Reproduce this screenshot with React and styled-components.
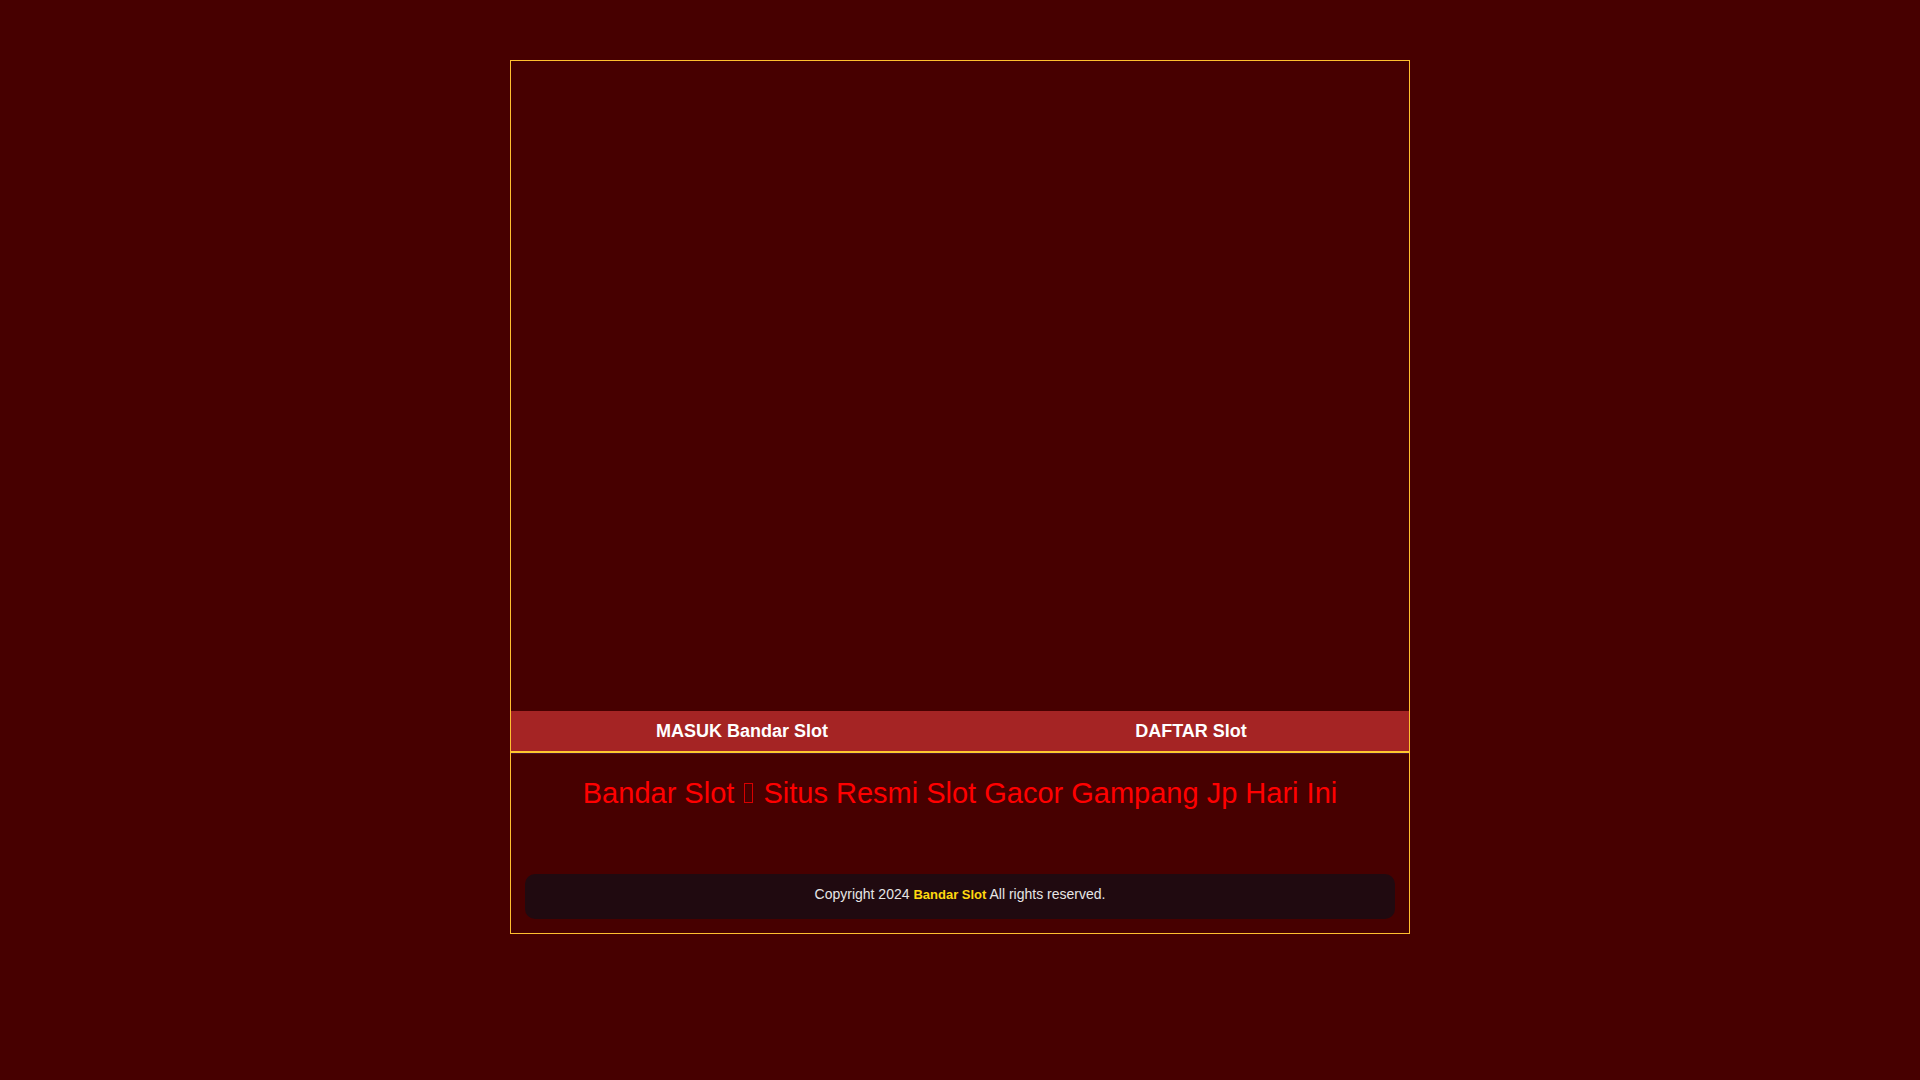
import React from "react"
import styled, { createGlobalStyle } from "styled-components"

const GlobalStyle = createGlobalStyle`
    * {
        box-sizing: border-box;
    }

    body {
        margin: 0;
        background: #470000;
        font-family: "Liberation Sans", Arial, sans-serif;
    }
`

const Container = styled.main`
    max-width: 900px;
    margin: 60px auto;
    border: 1px solid #ffbf2f;
`

const Banner = styled.div`
    height: 650px;
`

const Menu = styled.nav`
    display: grid;
    grid-template-columns: 1fr 1fr;
    background: #a52424;
    border-bottom: 2px solid #ffc72f;
    box-shadow: 0 1px 0 #4a1230;
`

const MenuLink = styled.a`
    padding: 0 0 0 13px;
    color: #fff;
    font-size: 18px;
    font-weight: bold;
    line-height: 40px;
    text-align: center;
    text-decoration: none;
`

const Title = styled.h1`
    margin: 0;
    padding: 20px 14px 61px;
    color: #f00;
    font-size: 29px;
    font-weight: normal;
    line-height: 40px;
    text-align: center;
`

// narrow empty box between the two halves of the title
const TitleBox = styled.span`
    display: inline-block;
    width: 9px;
    height: 20px;
    margin: 0 2px;
    border: 1px solid #d80000;
    vertical-align: baseline;
`

const Footer = styled.footer`
    margin: 0 14px 14px;
    padding: 10px 10px 14px;
    border-radius: 10px;
    background: #200a10;
    color: #e6e6e6;
    font-size: 14px;
    line-height: 20px;
    text-align: center;
`

const FooterLink = styled.a`
    color: #ffd90f;
    font-size: 13px;
    font-weight: bold;
    text-decoration: none;
`

export default function App() {
    return (
        <>
            <GlobalStyle />
            <Container>
                <Banner />
                <Menu>
                    <MenuLink href="#masuk">MASUK Bandar Slot</MenuLink>
                    <MenuLink href="#daftar">DAFTAR Slot</MenuLink>
                </Menu>
                <Title>
                    Bandar Slot <TitleBox aria-hidden="true" /> Situs Resmi Slot Gacor Gampang Jp Hari Ini
                </Title>
                <Footer>
                    Copyright 2024 <FooterLink href="#home">Bandar Slot</FooterLink> All rights reserved.
                </Footer>
            </Container>
        </>
    )
}
